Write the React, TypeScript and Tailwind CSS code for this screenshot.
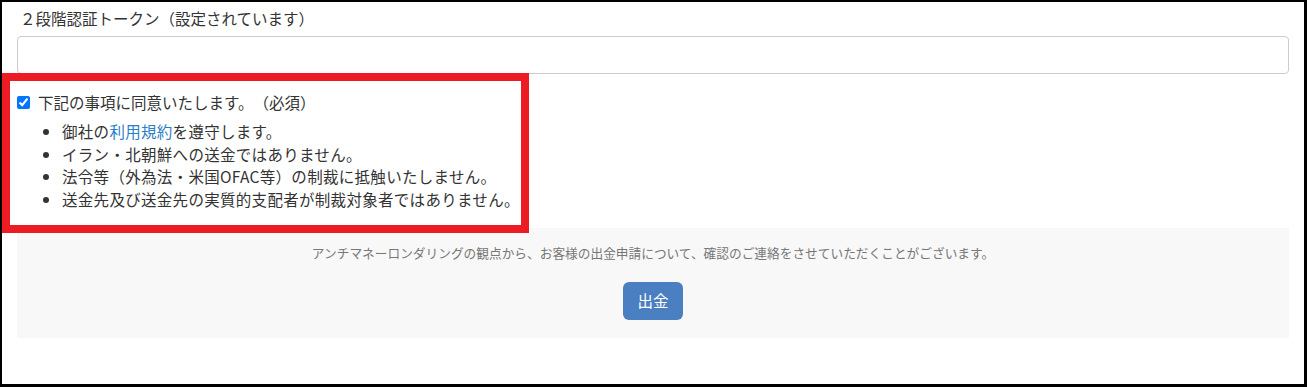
import React from "react";

const rules = [
  null,
  "イラン・北朝鮮への送金ではありません。",
  "法令等（外為法・米国OFAC等）の制裁に抵触いたしません。",
  "送金先及び送金先の実質的支配者が制裁対象者ではありません。",
];

export default function App() {
  return (
    <div className="relative h-[387px] w-[1307px] overflow-hidden bg-white border-black border-l-2 border-t-2 border-r-[3px] border-b-[3px] font-['Noto_Sans_CJK_JP','Noto_Sans',sans-serif] text-[#333] [text-spacing-trim:space-all]">
      <div className="px-[15px] pt-[5px]">
        {/* token field */}
        <label className="block pl-[3px] text-[15.5px] leading-[22px]">
          ２段階認証トークン（設定されています）
        </label>
        <input
          type="text"
          className="mt-[7px] block h-[38px] w-full rounded-[4px] border border-[#ccc] bg-white px-3 focus:outline-none"
        />

        {/* agreement */}
        <div className="mt-[17px] flex items-center text-[15.5px] leading-[22px]">
          <input
            type="checkbox"
            defaultChecked
            className="m-0 h-[13px] w-[13px] accent-[#0075ff]"
          />
          <span className="ml-[8px]">下記の事項に同意いたします。（必須）</span>
        </div>
        <ul className="mt-[7px] list-disc pl-[45px] text-[15.5px] leading-[22.7px] tracking-[0.3px]">
          {rules.map((r, i) =>
            r === null ? (
              <li key={i}>
                御社の<a className="text-[#2a7dc9]">利用規約</a>を遵守します。
              </li>
            ) : (
              <li key={i}>{r}</li>
            )
          )}
        </ul>

        {/* notice + submit */}
        <div className="mt-[17px] flex h-[110px] flex-col items-center bg-[#f8f8f8] pt-[16px]">
          <p className="text-[12.7px] leading-[18px] text-[#777]">
            アンチマネーロンダリングの観点から、お客様の出金申請について、確認のご連絡をさせていただくことがございます。
          </p>
          <button className="mt-[20px] h-[38px] w-[60px] rounded-[6px] bg-[#4a80c1] text-[15.5px] text-white">
            出金
          </button>
        </div>
      </div>

      {/* annotation frame */}
      <div className="pointer-events-none absolute left-0 top-[71px] h-[160px] w-[527px] border-[8px] border-[#ed1c24]" />
    </div>
  );
}
